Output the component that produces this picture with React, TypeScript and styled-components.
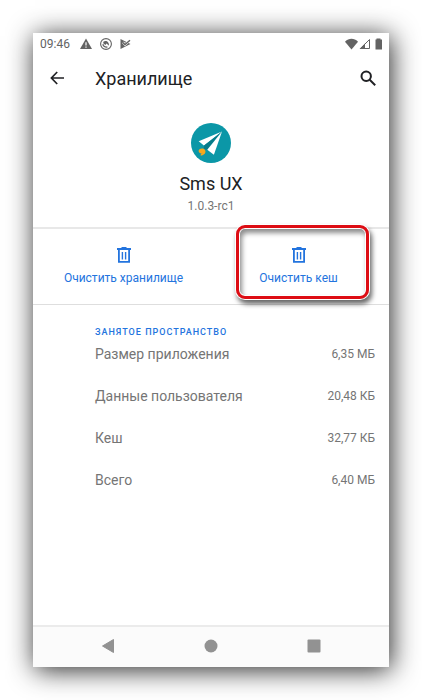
import React from "react";
import styled, { createGlobalStyle } from "styled-components";

const GlobalStyle = createGlobalStyle`
  *, *::before, *::after { box-sizing: border-box; }
  body {
    margin: 0;
    background: #fff;
    font-family: Roboto, "Noto Sans", sans-serif;
    color: #202124;
  }
  h1, h2, p, dl, dt, dd { margin: 0; font-weight: 400; }
  button {
    padding: 0;
    border: 0;
    background: none;
    color: inherit;
    font: inherit;
    cursor: pointer;
  }
  svg { display: block; flex: none; }
`;

const Backdrop = styled.div`
  display: flex;
  min-height: 100vh;
  padding: 33px;
`;

const Phone = styled.div`
  display: flex;
  flex: 1;
  flex-direction: column;
  min-width: 0;
  background: #fff;
  box-shadow: 2px 3px 25px 0 rgba(0, 0, 0, 0.85);
`;

const StatusBar = styled.div`
  display: flex;
  align-items: center;
  justify-content: space-between;
  height: 22px;
  padding: 0 6px 0 7px;
  color: #636363;
`;

const StatusGroup = styled.div<{ $gap: number }>`
  display: flex;
  align-items: center;
  gap: ${({ $gap }) => $gap}px;
`;

const Clock = styled.time`
  margin-right: 2px;
  font-size: 12px;
  line-height: 16px;
`;

const AppBar = styled.header`
  display: flex;
  align-items: center;
  height: 48px;
  padding: 0 12px 0 17px;
`;

const IconButton = styled.button`
  padding-bottom: 2px;
`;

const Title = styled.h1`
  flex: 1;
  margin-left: 31px;
  font-size: 18px;
  line-height: 24px;
`;

const AppInfo = styled.section`
  display: flex;
  flex-direction: column;
  align-items: center;
  padding: 20px 0 13px;
  border-bottom: 2px solid #e8e8e8;
`;

const AppName = styled.h2`
  margin-top: 9px;
  font-size: 18px;
  line-height: 24px;
`;

const Version = styled.p`
  margin-top: 2px;
  font-size: 12px;
  line-height: 16px;
  color: #757575;
`;

const Actions = styled.div`
  display: flex;
  height: 76px;
  padding: 0 3px;
  border-bottom: 1px solid #dedede;
`;

const ActionButton = styled.button`
  position: relative;
  display: flex;
  flex: 1;
  flex-direction: column;
  align-items: center;
  justify-content: center;
  gap: 7px;
  color: #2374de;
  font-size: 12px;
  line-height: 16px;
`;

const Highlight = styled.span`
  position: absolute;
  inset: -4px 17px 5px 25px;
  border: 3px solid #dd0d14;
  border-radius: 9px;
  box-shadow:
    0 0 0 1px #fff,
    inset 0 0 0 1px #fff,
    2px 4px 5px 1px rgba(0, 0, 0, 0.6),
    inset 2px 4px 5px 1px rgba(0, 0, 0, 0.45);
  pointer-events: none;
`;

const Usage = styled.section`
  flex: 1;
  padding: 20px 14px 20px 62px;
`;

const UsageTitle = styled.h2`
  font-size: 9px;
  font-weight: 500;
  line-height: 14px;
  letter-spacing: 1px;
  color: #2374de;
`;

const UsageRow = styled.div`
  display: flex;
  align-items: center;
  justify-content: space-between;
  padding-bottom: 22px;
  line-height: 20px;
  color: #757575;
`;

const UsageList = styled.dl`
  margin-top: 5px;
`;

const UsageLabel = styled.dt`
  font-size: 14px;
`;

const UsageValue = styled.dd`
  font-size: 12px;
`;

const NavBar = styled.nav`
  display: flex;
  height: 42px;
  padding: 0 23px 2px;
  border-top: 2px solid #ebebeb;
  background: #fbfbfb;
  color: #929292;
`;

const NavButton = styled.button`
  display: flex;
  flex: 1;
  align-items: center;
  justify-content: center;
`;

const TrashIcon = () => (
  <svg width="14" height="16" viewBox="0 0 14 16" fill="none" stroke="currentColor" aria-hidden="true">
    <path d="M0 2h14" strokeWidth="2" />
    <path d="M4.5 .8h5" strokeWidth="1.6" />
    <path d="M1.9 2v12.9h10.2V2" strokeWidth="1.8" />
    <path d="M5.4 5v7.5M8.6 5v7.5" strokeWidth="1.4" />
  </svg>
);

const AppLogo = () => (
  <svg width="40" height="40" viewBox="0 0 40 40" aria-hidden="true">
    <circle cx="20" cy="20" r="20" fill="#0b97a7" />
    <path d="M31 8.5 7.7 18.3l5.2 4.2z" fill="#fff" />
    <path d="M31 8.5 13 22.8l-.3 3.4 3.3.6z" fill="#087b89" />
    <path d="M31 8.5 16.3 26.8l6.6 4.9z" fill="#fff" />
    <path d="M8.2 26.5c1.6-1.5 4.6-1.3 5.8.4 1.5 2.5-.7 5.3-4.4 5.6l.2-1.2c1-.3 1.4-.6 1.5-1.1-2.5 1-4.8-1.7-3.1-3.7z" fill="#f5a81c" />
  </svg>
);

const usage = [
  ["Размер приложения", "6,35 МБ"],
  ["Данные пользователя", "20,48 КБ"],
  ["Кеш", "32,77 КБ"],
  ["Всего", "6,40 МБ"],
];

export default function App() {
  return (
    <>
      <GlobalStyle />
      <Backdrop>
        <Phone>
          <StatusBar>
            <StatusGroup $gap={8}>
              <Clock>09:46</Clock>
              <svg width="12" height="12" viewBox="0 0 12 12" aria-hidden="true">
                <path d="M6 .5 12 11H0z" fill="currentColor" />
                <path d="M6 4.3v3.2M6 8.5v1.3" stroke="#fff" strokeWidth="1.2" />
              </svg>
              <svg width="12" height="12" viewBox="0 0 12 12" fill="none" stroke="currentColor" aria-hidden="true">
                <circle cx="6" cy="6" r="5.4" strokeWidth="1.1" />
                <path d="M3.4 3.7c2.8-1.9 6.3.7 5.4 4.1L6.6 5.6 5.4 7 3.2 5.2z" fill="currentColor" stroke="none" />
                <path d="M2.9 6.1c.2 2 2.3 3.5 4.5 2.8" strokeWidth="1.2" />
              </svg>
              <svg width="11" height="12" viewBox="0 0 11 12" aria-hidden="true">
                <path d="M.5 1 10.5 6 .5 11z" fill="currentColor" />
                <path d="m3 4.4 2 2.2 5.5-5" fill="none" stroke="#fff" strokeWidth="2.4" />
                <path d="m2.8 4.4 2.2 2.2 5-4.4" fill="none" stroke="currentColor" strokeWidth="1.4" />
              </svg>
            </StatusGroup>
            <StatusGroup $gap={1}>
              <svg width="13" height="12" viewBox="0 0 13 12" aria-hidden="true">
                <path d="M0 3.7C4-.1 9-.1 13 3.7L6.5 11.5z" fill="currentColor" />
              </svg>
              <svg width="12" height="12" viewBox="0 0 12 12" aria-hidden="true">
                <path d="M1.5 10.5 10.5 1.5v9z" fill="none" stroke="currentColor" />
                <path d="M.5 11 6 5.5V11z" fill="currentColor" />
              </svg>
              <svg width="11" height="12" viewBox="0 0 11 12" aria-hidden="true">
                <path d="M4.5 1.6V.5h4v1.1H10v9.9H3.5V1.6z" fill="currentColor" />
              </svg>
            </StatusGroup>
          </StatusBar>
          <AppBar>
            <IconButton type="button" aria-label="Назад">
              <svg width="14" height="14" viewBox="0 0 14 14" fill="none" stroke="currentColor" strokeWidth="1.7" aria-hidden="true">
                <path d="M7.2 1 1.4 7l5.8 6M1.6 7H14" />
              </svg>
            </IconButton>
            <Title>Хранилище</Title>
            <IconButton type="button" aria-label="Поиск">
              <svg width="17" height="17" viewBox="0 0 17 17" fill="none" stroke="currentColor" strokeWidth="2" aria-hidden="true">
                <circle cx="6.2" cy="6.3" r="4.7" />
                <path d="m9.7 9.8 5.5 5.5" />
              </svg>
            </IconButton>
          </AppBar>
          <AppInfo>
            <AppLogo />
            <AppName>Sms UX</AppName>
            <Version>1.0.3-rc1</Version>
          </AppInfo>
          <Actions>
            <ActionButton type="button">
              <TrashIcon />
              Очистить хранилище
            </ActionButton>
            <ActionButton type="button">
              <TrashIcon />
              Очистить кеш
              <Highlight />
            </ActionButton>
          </Actions>
          <Usage>
            <UsageTitle>ЗАНЯТОЕ ПРОСТРАНСТВО</UsageTitle>
            <UsageList>
              {usage.map(([label, value]) => (
                <UsageRow key={label}>
                  <UsageLabel>{label}</UsageLabel>
                  <UsageValue>{value}</UsageValue>
                </UsageRow>
              ))}
            </UsageList>
          </Usage>
          <NavBar>
            <NavButton type="button" aria-label="Назад">
              <svg width="14" height="16" viewBox="0 0 14 16" aria-hidden="true">
                <path d="M12.5 1.5v13L1.5 8z" fill="currentColor" stroke="currentColor" strokeLinejoin="round" />
              </svg>
            </NavButton>
            <NavButton type="button" aria-label="Домой">
              <svg width="14" height="14" viewBox="0 0 14 14" aria-hidden="true">
                <circle cx="7" cy="7" r="6.5" fill="currentColor" />
              </svg>
            </NavButton>
            <NavButton type="button" aria-label="Недавние">
              <svg width="14" height="14" viewBox="0 0 14 14" aria-hidden="true">
                <rect x="0.5" y="0.5" width="13" height="13" rx="1" fill="currentColor" />
              </svg>
            </NavButton>
          </NavBar>
        </Phone>
      </Backdrop>
    </>
  );
}
